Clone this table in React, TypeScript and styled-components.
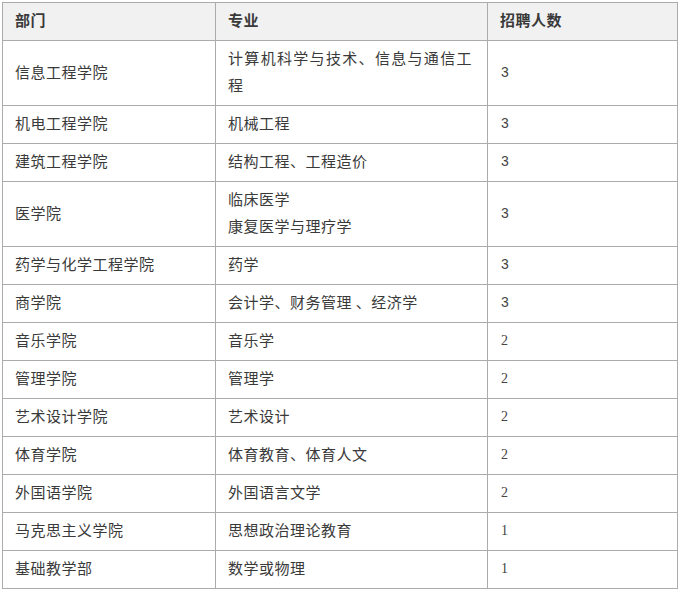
import React from "react";
import styled, { createGlobalStyle } from "styled-components";

const Global = createGlobalStyle`
  html, body { margin: 0; padding: 0; background: #fff; }
  body { font-family: "Noto Sans CJK SC", "Noto Sans", sans-serif; }
`;

const Wrap = styled.div`
  padding: 2px 0 0 2px;
`;

const Table = styled.table`
  border-collapse: collapse;
  table-layout: fixed;
  width: 675px;
  color: #3a3a3a;
  font-size: 15px;
  letter-spacing: 0.5px;
`;

const HeadCell = styled.th`
  background: #f1f1f1;
  border: 1px solid #ababab;
  font-weight: bold;
  text-align: left;
  padding: 3px 15px 7px 12px;
  line-height: 27px;
  height: 27px;
`;

const Cell = styled.td`
  border: 1px solid #ababab;
  padding: 3px 15px 7px 12px;
  line-height: 27px;
  text-align: justify;
  vertical-align: middle;
`;

const NumCell = styled.td<{ $serif: boolean }>`
  border: 1px solid #ababab;
  padding: 4px 15px 6px 13px;
  line-height: 27px;
  vertical-align: middle;
  letter-spacing: 0;
  font-size: 14px;
  color: #444;
  font-family: ${(p) =>
    p.$serif ? '"Liberation Serif", "Times New Roman", serif' : '"Liberation Sans", Arial, sans-serif'};
`;

type Row = { dept: string; major: string[]; n: number };

const rows: Row[] = [
  { dept: "信息工程学院", major: ["计算机科学与技术、信息与通信工程"], n: 3 },
  { dept: "机电工程学院", major: ["机械工程"], n: 3 },
  { dept: "建筑工程学院", major: ["结构工程、工程造价"], n: 3 },
  { dept: "医学院", major: ["临床医学", "康复医学与理疗学"], n: 3 },
  { dept: "药学与化学工程学院", major: ["药学"], n: 3 },
  { dept: "商学院", major: ["会计学、财务管理 、经济学"], n: 3 },
  { dept: "音乐学院", major: ["音乐学"], n: 2 },
  { dept: "管理学院", major: ["管理学"], n: 2 },
  { dept: "艺术设计学院", major: ["艺术设计"], n: 2 },
  { dept: "体育学院", major: ["体育教育、体育人文"], n: 2 },
  { dept: "外国语学院", major: ["外国语言文学"], n: 2 },
  { dept: "马克思主义学院", major: ["思想政治理论教育"], n: 1 },
  { dept: "基础教学部", major: ["数学或物理"], n: 1 },
];

export default function App() {
  return (
    <>
      <Global />
      <Wrap>
        <Table>
          <colgroup>
            <col style={{ width: 213 }} />
            <col style={{ width: 272 }} />
            <col style={{ width: 190 }} />
          </colgroup>
          <thead>
            <tr>
              <HeadCell>部门</HeadCell>
              <HeadCell>专业</HeadCell>
              <HeadCell>招聘人数</HeadCell>
            </tr>
          </thead>
          <tbody>
            {rows.map((r) => (
              <tr key={r.dept}>
                <Cell>{r.dept}</Cell>
                <Cell>
                  {r.major.map((m, i) => (
                    <React.Fragment key={i}>
                      {i > 0 && <br />}
                      {m}
                    </React.Fragment>
                  ))}
                </Cell>
                <NumCell $serif={r.n !== 3}>{r.n}</NumCell>
              </tr>
            ))}
          </tbody>
        </Table>
      </Wrap>
    </>
  );
}
